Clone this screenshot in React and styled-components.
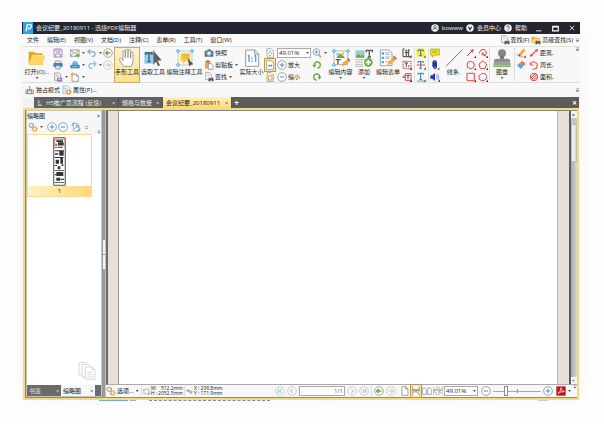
import React, { useState } from "react";
import styled, { createGlobalStyle } from "styled-components";

const BLUE = "#3f93d2";
const RED = "#e04545";
const GREEN = "#68ad3c";
const INK = "#666";

// small icons are drawn on a 30 unit grid, the large ones on a 54 unit grid
const glyphs = {
  save: (
    <g fill="none" stroke="#a48bc9" strokeWidth="3">
      <path d="M3 3h22l2 3v21H3z" />
      <path d="M9 3v9h12V3M8 27v-9h14v9" />
      <path d="M16 5v4" />
    </g>
  ),
  print: (
    <g>
      <path d="M7 3h16v7H7z" fill="#fff" stroke="#777" strokeWidth="2" />
      <rect x="1" y="9" width="28" height="12" rx="3" fill="#3f84c0" />
      <path d="M8 17h14v10H8z" fill="#fff" stroke="#777" strokeWidth="2" />
      <path d="M11 21h8M11 24h8" stroke="#777" />
    </g>
  ),
  docExport: (
    <g>
      <path d="M5 3h13l5 5v17H5z" fill="#fff" stroke="#777" strokeWidth="2" />
      <path d="M9 9h7M9 13h10" stroke="#999" strokeWidth="2" />
      <path d="M12 17h16v12H12z" fill="#9779bd" />
      <path d="M16 20h7v3h-7z" fill="#fff" />
    </g>
  ),
  mail: (
    <g>
      <path d="M2 6h25v19H2z" fill="#fff" stroke="#777" strokeWidth="2" />
      <path d="M2 6l12 10L27 6M2 25l9-11M27 25l-9-11" fill="none" stroke="#777" strokeWidth="2" />
      <path d="M16 20h7v-4l7 7-7 6v-4h-7z" fill={GREEN} />
    </g>
  ),
  scan: (
    <g>
      <path d="M5 15L10 4h10l6 11z" fill="#5fb3e8" />
      <path d="M1 15h28v10H1z" fill="#3f84c0" />
      <path d="M5 20h18" stroke="#cde7f7" strokeWidth="2" />
    </g>
  ),
  docNew: (
    <g>
      <path d="M6 6h13l6 6v16H6z" fill="#fff" stroke="#777" strokeWidth="2" />
      <path d="M19 6v6h6" fill="none" stroke="#777" strokeWidth="2" />
      <path d="M7 0v13M1 7h12M3 3l8 8M11 3l-8 8" stroke="#f2a23c" strokeWidth="2" />
    </g>
  ),
  undo: <path d="M10 4L3 11l7 7M4 11h13a7 7 0 0 1 0 14h-3" fill="none" stroke="#77b4e6" strokeWidth="4" />,
  redo: <path d="M20 4l7 7-7 7M26 11H13a7 7 0 0 0 0 14h3" fill="none" stroke="#8bc1ea" strokeWidth="4" />,
  back: (
    <g fill="none">
      <circle cx="15" cy="15" r="13" stroke="#888" strokeWidth="2" />
      <path d="M14 9l-6 6 6 6M9 15h13" stroke={GREEN} strokeWidth="4" />
    </g>
  ),
  forward: (
    <g fill="none">
      <circle cx="15" cy="15" r="13" stroke="#bbb" strokeWidth="2" />
      <path d="M16 9l6 6-6 6M21 15H8" stroke="#acd393" strokeWidth="3" />
    </g>
  ),
  camera: (
    <g>
      <path d="M2 8h7l2-4h9l2 4h6v18H2z" fill="#6b6b6b" />
      <circle cx="15" cy="16" r="8" fill="#6db8ec" />
      <circle cx="15" cy="16" r="4" fill="#fff" />
    </g>
  ),
  clipboard: (
    <g>
      <path d="M3 4h17v22H3z" fill="#f0a849" />
      <path d="M7 1h9v6H7z" fill="#777" />
      <path d="M13 11h9l5 5v12H13z" fill="#fff" stroke="#777" strokeWidth="2" />
    </g>
  ),
  find: (
    <g>
      <path d="M5 2h11l6 6v15H5z" fill="#fff" stroke="#888" strokeWidth="2" />
      <path d="M9 8h6M9 12h8" stroke="#9cc" strokeWidth="2" />
      <path d="M14 17h5l1 3h2l1-3h5l1 11h-6v-4h-3v4h-7z" fill="#555" />
    </g>
  ),
  findFolder: (
    <g>
      <path d="M1 5h9l3 3h13v17H1z" fill="#e9b53b" />
      <path d="M1 25l5-13h24l-5 13z" fill="#ffd76a" />
      <path d="M14 17h5l1 3h2l1-3h5l1 11h-6v-4h-3v4h-7z" fill="#555" />
    </g>
  ),
  fitPage: (
    <g>
      <path d="M6 2h12l7 7v19H6z" fill="#fff" stroke="#888" strokeWidth="2" />
      <path d="M15 7l-4 4h8zM15 25l-4-4h8zM9 16l4-3v6zM22 16l-4-3v6z" fill="#4da3e0" />
    </g>
  ),
  fitWidth: (
    <g>
      <path d="M5 2h14l7 7v19H5z" fill="#fff" stroke="#888" strokeWidth="2" />
      <path d="M8 17l5-5v3h5v-3l5 5-5 5v-3h-5v3z" fill="#4da3e0" />
    </g>
  ),
  fitVisible: (
    <g>
      <path d="M6 2h12l7 7v19H6z" fill="#fff" stroke="#888" strokeWidth="2" />
      <path d="M10 11h11v13H10z" fill="none" stroke="#f09a32" strokeWidth="3" />
    </g>
  ),
  plus: (
    <g fill="none">
      <circle cx="15" cy="15" r="13" fill="#fff" stroke="#777" strokeWidth="2" />
      <path d="M15 8v14M8 15h14" stroke={BLUE} strokeWidth="3" />
    </g>
  ),
  minus: (
    <g fill="none">
      <circle cx="15" cy="15" r="13" fill="#fff" stroke="#777" strokeWidth="2" />
      <path d="M8 15h14" stroke={BLUE} strokeWidth="3" />
    </g>
  ),
  loupe: (
    <g fill="none">
      <path d="M19 19l8 9" stroke="#f2a23c" strokeWidth="5" />
      <circle cx="13" cy="12" r="10" fill="#fff" stroke="#777" strokeWidth="2" />
      <path d="M13 7v10M8 12h10" stroke={BLUE} strokeWidth="3" />
    </g>
  ),
  rotateLeft: (
    <g>
      <path d="M7 15a9 9 0 1 1 9 9" fill="none" stroke={GREEN} strokeWidth="4" />
      <path d="M1 14h13l-7 9z" fill={GREEN} />
    </g>
  ),
  rotateRight: (
    <g>
      <path d="M23 15a9 9 0 1 0-9 9" fill="none" stroke={GREEN} strokeWidth="4" />
      <path d="M16 14h13l-7 9z" fill={GREEN} />
    </g>
  ),
  typewriter: (
    <g fill="none" stroke="#444" strokeWidth="3">
      <path d="M3 3h5M3 3v23h22M8 14h11M13 14v12M20 5v21M17 6h6" />
      <path d="M11 7h4v4h-4z" fill="#444" strokeWidth="1" />
      <path d="M29 21v8h-7z" fill="#333" stroke="none" />
    </g>
  ),
  textBox: (
    <g fill="none">
      <path d="M3 4h24v21H3z" stroke={RED} strokeWidth="3" strokeDasharray="5 2" />
      <path d="M8 9h10M13 9v11M18 18h5" stroke="#444" strokeWidth="3" />
      <path d="M30 23v7h-7z" fill="#333" />
    </g>
  ),
  callout: (
    <g fill="none">
      <path d="M10 5h17v20H10zM10 10L2 15l8 3" stroke={RED} strokeWidth="3" />
      <path d="M14 10h9M18 10v11" stroke="#444" strokeWidth="3" />
      <path d="M30 23v7h-7z" fill="#333" />
    </g>
  ),
  highlight: (
    <g>
      <rect x="1" y="1" width="26" height="26" rx="5" fill="#f8ed3d" />
      <path d="M6 10V6h16v4M14 6v17M10 23h8" fill="none" stroke="#2f77ae" strokeWidth="3" />
      <path d="M29 22v7h-6z" fill="#333" />
    </g>
  ),
  strike: (
    <g fill="none">
      <path d="M6 9V5h16v4M14 5v20M10 25h8" stroke="#2f77ae" strokeWidth="3" />
      <path d="M2 15h25" stroke={RED} strokeWidth="3" />
      <path d="M29 22v7h-6z" fill="#333" />
    </g>
  ),
  underline: (
    <g fill="none">
      <path d="M6 8V4h16v4M14 4v18M10 22h8" stroke="#2f77ae" strokeWidth="3" />
      <path d="M3 27h22" stroke="#4ab58a" strokeWidth="3" />
      <path d="M29 22v7h-6z" fill="#333" />
    </g>
  ),
  note: (
    <g>
      <path d="M2 3h26v18H14l-8 7 1-7H2z" fill="#f5ee1c" stroke="#98920f" strokeWidth="2" />
      <path d="M7 9h16M7 14h14" stroke="#98920f" strokeWidth="2" />
    </g>
  ),
  attach: (
    <g fill="none">
      <path d="M9 20V8a5 5 0 0 1 10 0v13a4 4 0 0 1-8 0V9h4v11" stroke="#23338f" strokeWidth="4" />
      <path d="M28 22v7h-6z" fill="#333" />
    </g>
  ),
  sound: (
    <g>
      <path d="M1 10h6l8-7v24l-8-7H1z" fill="#1e39b0" />
      <path d="M19 9q4 6 0 12M23 5q7 10 0 20" fill="none" stroke="#5a6cc0" strokeWidth="2" />
      <path d="M30 22v7h-6z" fill="#333" />
    </g>
  ),
  arrow: (
    <g fill="none">
      <path d="M3 24L20 7" stroke={RED} strokeWidth="3" />
      <path d="M24 3l-4 11-7-7z" fill={RED} />
      <path d="M30 23v7h-6z" fill="#333" />
    </g>
  ),
  circle: (
    <g fill="none">
      <circle cx="14" cy="15" r="11" stroke={RED} strokeWidth="3" />
      <path d="M30 23v7h-6z" fill="#333" />
    </g>
  ),
  square: (
    <g fill="none">
      <path d="M3 4h22v22H3z" stroke={RED} strokeWidth="3" />
      <path d="M30 23v7h-6z" fill="#333" />
    </g>
  ),
  lasso: (
    <g fill="none">
      <path d="M3 16L11 4l9 1 6 10-7 8-8-4 3-5 11 12" stroke={RED} strokeWidth="3" />
      <path d="M30 23v7h-6z" fill="#333" />
    </g>
  ),
  pentagon: (
    <g fill="none">
      <path d="M14 3l12 9-5 14H7L3 12z" stroke={RED} strokeWidth="3" />
      <path d="M30 23v7h-6z" fill="#333" />
    </g>
  ),
  cloud: (
    <g fill="none">
      <path
        d="M8 8q3-6 8-3 6-3 8 4 5 4 1 9 0 6-7 7-6 4-10-1-7-1-5-8-2-6 5-8z"
        stroke={RED}
        strokeWidth="3"
      />
      <path d="M30 23v7h-6z" fill="#333" />
    </g>
  ),
  pencil: (
    <g>
      <path d="M9 18L22 2l6 5-13 16z" fill="#f2a23c" />
      <path d="M9 18l6 5-8 2z" fill="#555" />
      <path d="M1 21q4-4 6 1t9 5l6-1" fill="none" stroke={RED} strokeWidth="2" />
      <path d="M29 22v7h-6z" fill="#333" />
    </g>
  ),
  eraser: (
    <g>
      <path d="M12 8l7-6 10 9-7 8z" fill="#f0763f" />
      <path d="M12 8l10 11-8 8L3 16z" fill="#52a4e2" />
    </g>
  ),
  distance: (
    <g>
      <path d="M8 21L22 8" stroke={RED} strokeWidth="5" strokeDasharray="5 2" />
      <path d="M3 26l2-9 7 7zM27 3l-2 9-7-7z" fill={RED} />
    </g>
  ),
  perimeter: <path d="M5 12l7-8 13 7-2 14-12 3M4 7v8h8" fill="none" stroke={RED} strokeWidth="3" />,
  area: (
    <g fill="none" stroke={RED} strokeWidth="3">
      <circle cx="15" cy="15" r="11" />
      <path d="M6 18L18 5M8 23L24 7M13 25l11-11" />
    </g>
  ),
  download: <path d="M14 3v15M9 12l5 7 5-7M3 14v12h22V14M8 26V12M20 26V12" fill="none" stroke="#888" strokeWidth="3" />,
  properties: (
    <g>
      <path d="M3 3h14l6 6v17H3z" fill="#fff" stroke="#5aa6dc" strokeWidth="2" />
      <path d="M7 10h7M7 15h6M7 20h4" stroke="#4da3e0" strokeWidth="2" />
      <circle cx="20" cy="21" r="6" fill="none" stroke="#f09a32" strokeWidth="5" strokeDasharray="4 1" />
    </g>
  ),
  gears: (
    <g fill="none">
      <circle cx="10" cy="10" r="6" stroke="#999" strokeWidth="4" strokeDasharray="4 1" />
      <circle cx="20" cy="21" r="6" stroke="#f2a23c" strokeWidth="5" strokeDasharray="4 1" />
    </g>
  ),
  pageRotate: (
    <g fill="none">
      <path d="M7 4h12l5 5v18H7z" fill="#fff" stroke="#888" strokeWidth="2" />
      <path d="M3 11q0-8 8-9M27 19q0 8-8 9M10 21l9-9M13 10h8v8" stroke="#4da3e0" strokeWidth="3" />
    </g>
  ),
  tree: <path d="M3 5h14M3 13h9M3 21h18M3 28h24" fill="none" stroke="#d5d5d5" strokeWidth="4" />,
  size: <path d="M8 5h18v20H4V9M1 12l3-7 5 5M22 22l4 6 3-6" fill="none" stroke="#777" strokeWidth="2" />,
  position: <path d="M1 12h16M9 5v13M14 17h15M21 11v15" fill="none" stroke="#777" strokeWidth="3" />,
  first: (
    <g fill="none">
      <circle cx="15" cy="15" r="13" stroke="#bbb" strokeWidth="2" />
      <path d="M10 9v12M20 9l-6 6 6 6" stroke="#82c1ee" strokeWidth="3" />
    </g>
  ),
  prev: (
    <g fill="none">
      <circle cx="15" cy="15" r="13" stroke="#bbb" strokeWidth="2" />
      <path d="M17 9l-6 6 6 6" stroke="#82c1ee" strokeWidth="3" />
    </g>
  ),
  next: (
    <g fill="none">
      <circle cx="15" cy="15" r="13" stroke="#bbb" strokeWidth="2" />
      <path d="M13 9l6 6-6 6" stroke="#82c1ee" strokeWidth="3" />
    </g>
  ),
  last: (
    <g fill="none">
      <circle cx="15" cy="15" r="13" stroke="#bbb" strokeWidth="2" />
      <path d="M10 9l6 6-6 6M20 9v12" stroke="#82c1ee" strokeWidth="3" />
    </g>
  ),
  onePage: <path d="M6 2h11l7 7v19H6zM17 2v7h7" fill="#fff" stroke="#777" strokeWidth="2" />,
  scrollPage: (
    <g fill="#fff" stroke="#777" strokeWidth="2">
      <path d="M5 1v9h20V1M5 29V18h12l8 7v4" />
      <path d="M2 14h26" stroke="#999" strokeWidth="3" />
    </g>
  ),
  twoPages: <path d="M1 6h7l5 5v14H1zM17 6h7l5 5v14H17z" fill="#fff" stroke="#888" strokeWidth="2" />,
  twoScroll: (
    <path d="M2 2v9h10V2M18 2v9h10V2M2 28V15l10 8v5M18 28V15l10 8v5M0 13h30" fill="none" stroke="#999" strokeWidth="2" />
  ),
  pdf: (
    <g>
      <path d="M1 1h28v28H1z" fill="#c4161c" />
      <path d="M6 22q10-6 9-17 1 11 10 12-10-1-19 5z" fill="none" stroke="#fff" strokeWidth="2" />
    </g>
  ),
  user: (
    <g>
      <circle cx="15" cy="15" r="14" fill="#f2f2f2" />
      <circle cx="15" cy="11" r="5" fill="none" stroke="#23262f" strokeWidth="2" />
      <path d="M6 24q1-8 9-8t9 8" fill="none" stroke="#23262f" strokeWidth="2" />
    </g>
  ),
  vip: (
    <g>
      <circle cx="15" cy="15" r="14" fill="#f2f2f2" />
      <path d="M9 10l6 11 6-11" fill="none" stroke="#23262f" strokeWidth="4" />
    </g>
  ),
  help: (
    <g>
      <circle cx="15" cy="15" r="14" fill="#f2f2f2" />
      <path d="M10 11q1-5 6-4 6 2 3 7l-4 4M15 21v3" fill="none" stroke="#23262f" strokeWidth="3" />
    </g>
  ),
  minimize: <path d="M5 25h22" stroke="#fff" strokeWidth="4" />,
  maximize: <path d="M3 6h24v19H3zM3 8h24" fill="none" stroke="#fff" strokeWidth="5" />,
  close: <path d="M4 4l22 22M26 4L4 26" stroke="#fff" strokeWidth="4" />,
  chevrons: <path d="M8 5l7 7 7-7M8 17l7 7 7-7" fill="none" stroke="#555" strokeWidth="4" />,
  overflow: <path d="M5 5h20M7 15h16l-8 9z" fill="#666" stroke="#666" strokeWidth="3" />,
};

const bigGlyphs = {
  folder: (
    <g>
      <path d="M2 8h17l4 5h21v34H2z" fill="#e2a628" />
      <path d="M12 19h40l-9 28H2z" fill="#ffd563" />
      <path d="M12 19h40l-1 3H13z" fill="#ffe79c" />
    </g>
  ),
  hand: (
    <path
      d="M17 52L5 34q-3-5 2-6 4 0 8 7V9q0-4 3-4t4 4v17-21q0-4 4-4t4 4v21V6q0-4 4-4t4 4v22V12q0-3 3-3t4 3v24q0 9-6 16z"
      fill="#fff"
      stroke="#777"
      strokeWidth="2"
    />
  ),
  selectText: (
    <g>
      <path d="M1 8h28v36H1z" fill="#8fcdf5" />
      <path d="M5 18v-6h19v6M15 12v26M10 38h10" fill="none" stroke="#555" strokeWidth="4" />
      <path d="M29 4v43" stroke="#555" strokeWidth="2" />
      <path d="M30 7l23 27-12 1 7 14-6 3-6-14-6 7z" fill="#606060" />
    </g>
  ),
  editNote: (
    <g>
      <path d="M6 6h42v42H6z" fill="#fff4ce" stroke="#8ebfdf" strokeWidth="2" />
      <path d="M14 13h28v22H30l-9 9v-9h-7z" fill="#fbc940" />
      <path d="M19 19h18M19 25h18" stroke="#d69a1b" strokeWidth="2" />
      <path d="M35 28l17 18-8 1-4 6z" fill="#505050" />
      <g fill="#fff" stroke="#4da3e0" strokeWidth="3">
        <circle cx="6" cy="6" r="4" />
        <circle cx="48" cy="6" r="4" />
        <circle cx="6" cy="48" r="4" />
      </g>
    </g>
  ),
  actual: (
    <g>
      <path d="M8 3h27l12 12v37H8z" fill="#fff" stroke="#666" strokeWidth="2" />
      <path d="M35 3v12h12" fill="none" stroke="#666" strokeWidth="2" />
      <path d="M14 22l4-3v20M34 22l4-3v20M27 25v4M27 34v4" fill="none" stroke="#4da3e0" strokeWidth="4" />
    </g>
  ),
  editContent: (
    <g>
      <path d="M6 6h41v41H6z" fill="#fff" stroke="#8d8d8d" strokeWidth="2" />
      <path d="M13 27l9-15 9 6 9 9z" fill={GREEN} />
      <path d="M13 12h10v8H13z" fill="#91cdf0" />
      <circle cx="33" cy="14" r="4" fill="#f8c03c" />
      <path d="M11 32h15M18 32v14" stroke="#555" strokeWidth="4" />
      <path d="M29 51l3-10 16-12 6 7-15 13z" fill="#f3a64c" />
      <path d="M48 29l6 7" stroke={RED} strokeWidth="4" />
      <g fill="#fff" stroke="#4da3e0" strokeWidth="3">
        <circle cx="6" cy="6" r="4" />
        <circle cx="48" cy="6" r="4" />
        <circle cx="6" cy="48" r="4" />
      </g>
    </g>
  ),
  add: (
    <g>
      <path d="M1 4h28v22H1z" fill="#92ccef" />
      <path d="M1 26l9-12 7 7 6-5 6 10z" fill={GREEN} />
      <circle cx="22" cy="9" r="3" fill="#f8c03c" />
      <path d="M34 10V4h18v6M43 4v20M38 24h10" fill="none" stroke="#555" strokeWidth="4" />
      <path d="M1 32h26M1 39h23M1 46h23M1 52h25" stroke="#999" strokeWidth="2" />
      <circle cx="40" cy="40" r="13" fill={GREEN} />
      <path d="M40 32v16M32 40h16" stroke="#fff" strokeWidth="5" />
    </g>
  ),
  editForm: (
    <g>
      <path d="M4 3h26l9 9v38H4z" fill="#fff" stroke="#777" strokeWidth="2" />
      <path d="M8 10h7v7H8zM8 23h7v7H8zM8 36h7v7H8z" fill="#4da3e0" />
      <path d="M19 11h13M19 16h13M19 24h15M19 29h12M19 38h9" stroke="#8cb9d8" strokeWidth="3" />
      <path d="M25 49l3-11 17-16 8 7-17 16z" fill="#f3a64c" />
      <path d="M44 22l8 8" stroke={RED} strokeWidth="4" />
    </g>
  ),
  line: <path d="M3 52L51 3" stroke={RED} strokeWidth="3" />,
  stamp: (
    <g>
      <circle cx="27" cy="13" r="12" fill="#858585" />
      <path d="M22 20h10l2 13H20z" fill="#777" />
      <path d="M3 33q2-4 8-4h32q6 0 8 4v8H3z" fill="#8e8e8e" />
      <path d="M1 43h52v4H1z" fill="#6b6b6b" />
      <path d="M1 49h52v5H1z" fill="#7dbb4d" />
    </g>
  ),
  pages: (
    <g fill="#fff" stroke="#c6c6c6" strokeWidth="2">
      <path d="M3 2h22l7 7v30H3z" />
      <path d="M12 8h22l7 7v30H12z" />
      <path d="M22 15h20l9 9v28H22zM42 15v9h9M28 31h15M28 38h17M28 45h17" />
    </g>
  ),
};

function Icon({ name, size = 10 }) {
  return (
    <Svg viewBox="0 0 30 30" width={size} height={size} aria-hidden="true">
      {glyphs[name]}
    </Svg>
  );
}

function BigIcon({ name }) {
  return (
    <Svg viewBox="0 0 54 54" width="18" height="18" aria-hidden="true">
      {bigGlyphs[name]}
    </Svg>
  );
}

function Tool({ icon, label, width, caret, active }) {
  return (
    <ToolButton $width={width} $active={active}>
      <BigIcon name={icon} />
      <ToolLabel>{label}</ToolLabel>
      {caret && <Caret />}
    </ToolButton>
  );
}

// each item: [icon, label, has a menu, is selected]
function Stack({ items, width }) {
  return (
    <StackColumn $width={width}>
      {items.map(([icon, label, caret, active]) => (
        <SmallButton key={icon} $active={active} aria-label={label || icon}>
          <Icon name={icon} />
          {label && <span>{label}</span>}
          {caret && <Caret />}
        </SmallButton>
      ))}
    </StackColumn>
  );
}

function ZoomSelect({ label }) {
  return (
    <SelectBox>
      <Select aria-label={label} defaultValue="49.01%">
        <option>49.01%</option>
        <option>100%</option>
      </Select>
      <Caret />
    </SelectBox>
  );
}

const menus = ["文件", "编辑(E)", "视图(V)", "文档(D)", "注释(C)", "表单(R)", "工具(T)", "窗口(W)"];

function Ribbon() {
  return (
    <RibbonBar>
      <Tool icon="folder" label="打开(O)..." width={30} caret />
      <Stack width={17} items={[["save"], ["print"], ["docExport", "", true]]} />
      <Stack width={17} items={[["mail", "", true], ["scan", "", true], ["docNew", "", true]]} />
      <Stack width={16} items={[["undo", "", true], ["redo", "", true]]} />
      <Stack width={12} items={[["back"], ["forward"]]} />
      <Tool icon="hand" label="手形工具" width={26} active />
      <Tool icon="selectText" label="选取工具" width={26} />
      <Tool icon="editNote" label="编辑注释工具" width={37} />
      <Stack
        width={36}
        items={[["camera", "快照"], ["clipboard", "剪贴板", true], ["find", "查找", true]]}
      />
      <Tool icon="actual" label="实际大小" width={25} />
      <Stack width={12} items={[["fitPage"], ["fitWidth", "", false, true], ["fitVisible"]]} />
      <StackColumn $width={35}>
        <ZoomSelect label="缩放比例" />
        <SmallButton>
          <Icon name="plus" />
          <span>放大</span>
        </SmallButton>
        <SmallButton>
          <Icon name="minus" />
          <span>缩小</span>
        </SmallButton>
      </StackColumn>
      <Stack width={17} items={[["loupe", "", true], ["rotateLeft"], ["rotateRight"]]} />
      <Tool icon="editContent" label="编辑内容" width={25} caret />
      <Tool icon="add" label="添加" width={22} caret />
      <Tool icon="editForm" label="编辑表单" width={26} />
      <Stack width={13} items={[["typewriter"], ["textBox"], ["callout"]]} />
      <Divider />
      <Stack width={13} items={[["highlight"], ["strike"], ["underline"]]} />
      <Divider />
      <Stack width={13} items={[["note"], ["attach"], ["sound"]]} />
      <Tool icon="line" label="线条," width={23} />
      <Stack width={12} items={[["arrow"], ["circle"], ["square"]]} />
      <Stack width={12} items={[["lasso"], ["pentagon"], ["cloud"]]} />
      <Divider />
      <Tool icon="stamp" label="图章" width={24} caret />
      <Divider />
      <Stack width={13} items={[["pencil"], ["eraser"]]} />
      <Stack width={28} items={[["distance", "距离,"], ["perimeter", "周长,"], ["area", "面积,"]]} />
      <Spacer />
      <Icon name="overflow" size={5} />
    </RibbonBar>
  );
}

function ThumbnailPanel() {
  return (
    <Side>
      <PanelHead>
        缩略图
        <Spacer />
        <TinyClose aria-label="关闭缩略图">×</TinyClose>
      </PanelHead>
      <PanelTools>
        <SmallButton aria-label="选项">
          <Icon name="gears" />
          <Caret />
        </SmallButton>
        <ToolPair>
          <SmallButton aria-label="放大缩略图">
            <Icon name="plus" />
          </SmallButton>
          <SmallButton aria-label="缩小缩略图">
            <Icon name="minus" />
          </SmallButton>
        </ToolPair>
        <SmallButton aria-label="旋转页面">
          <Icon name="pageRotate" />
        </SmallButton>
        <Icon name="chevrons" size={5} />
        <Spacer />
        <PanelMore>
          <Icon name="overflow" size={4} />
        </PanelMore>
      </PanelTools>
      <ThumbList>
        <Thumb>
          <Svg viewBox="0 0 39 147" width="13" height="49" aria-hidden="true">
            <rect x="2" y="2" width="35" height="143" rx="3" fill="#fff" stroke="#777" strokeWidth="4" />
            <g fill="#333">
              <path d="M10 10h20v5H10zM7 20h5v3H7zM15 16h17v8H15zM5 31h8v2H5zM15 29h14v3H15z" />
              <path d="M6 40h27v3H6zM19 43h13v13H19zM6 49h10v4H6zM5 60h27v3H5zM22 63h8v17H22z" />
              <path d="M8 68h10v12H8zM5 84h7v3H5zM14 88h8v9h-8zM26 82h5v5h-5zM5 99h28v2H5z" />
              <path d="M10 105h21v12H10zM6 111h4v4H6zM10 122h12v9H10zM24 125h9v4h-9zM5 135h29v2H5z" />
            </g>
            <rect x="4" y="7" width="32" height="19" fill="none" stroke="#ef7b45" strokeWidth="3" />
          </Svg>
          <ThumbLabel>1</ThumbLabel>
        </Thumb>
        <Ghost>
          <BigIcon name="pages" />
        </Ghost>
      </ThumbList>
      <PanelTabs>
        <PanelTab>
          书签 <Mark>×</Mark>
        </PanelTab>
        <PanelTab $active>
          缩略图 <Mark>×</Mark>
        </PanelTab>
      </PanelTabs>
    </Side>
  );
}

function StatusBar() {
  const [zoom, setZoom] = useState(24);
  return (
    <Status>
      <SmallButton>
        <Icon name="gears" />
        <span>选项...</span>
        <Caret />
      </SmallButton>
      <Divider />
      <Icon name="size" size={7} />
      <Measure>
        <dt>W:</dt>
        <dd>512.2mm</dd>
        <dt>H :</dt>
        <dd>2052.5mm</dd>
      </Measure>
      <Divider />
      <Icon name="position" size={7} />
      <Measure>
        <dt>X :</dt>
        <dd>238.8mm</dd>
        <dt>Y :</dt>
        <dd>171.9mm</dd>
      </Measure>
      <Spacer />
      <StatusGroup>
        <SmallButton aria-label="第一页">
          <Icon name="first" />
        </SmallButton>
        <SmallButton aria-label="上一页">
          <Icon name="prev" />
        </SmallButton>
        <PageField aria-label="页码" defaultValue="1/1" />
        <SmallButton aria-label="下一页">
          <Icon name="next" />
        </SmallButton>
        <SmallButton aria-label="最后一页">
          <Icon name="last" />
        </SmallButton>
        <Divider />
        <SmallButton aria-label="后退">
          <Icon name="back" />
        </SmallButton>
        <SmallButton aria-label="前进">
          <Icon name="forward" />
        </SmallButton>
      </StatusGroup>
      <ViewModes>
        <SmallButton aria-label="单页">
          <Icon name="onePage" />
        </SmallButton>
        <SmallButton aria-label="连续" $active>
          <Icon name="scrollPage" />
        </SmallButton>
        <SmallButton aria-label="双页">
          <Icon name="twoPages" />
        </SmallButton>
        <SmallButton aria-label="双页连续">
          <Icon name="twoScroll" />
        </SmallButton>
      </ViewModes>
      <ZoomSelect label="页面缩放" />
      <ZoomControls>
        <SmallButton aria-label="缩小页面">
          <Icon name="minus" />
        </SmallButton>
        <Range
          type="range"
          aria-label="缩放"
          value={zoom}
          onChange={(e) => setZoom(Number(e.target.value))}
        />
        <SmallButton aria-label="放大页面">
          <Icon name="plus" />
        </SmallButton>
      </ZoomControls>
      <SmallButton aria-label="PDF">
        <Icon name="pdf" />
        <Caret />
      </SmallButton>
      <StatusMore>
        <Icon name="overflow" size={4} />
      </StatusMore>
    </Status>
  );
}

function App() {
  return (
    <Page>
      <GlobalStyle />
      <Window>
        <TitleBar>
          <Logo viewBox="0 0 30 36" width="10" height="12" aria-hidden="true">
            <path d="M0 0h30v36H0z" fill="#22a7ee" />
            <path d="M9 28l4-20h9q6 2 2 8-4 5-10 4" fill="none" stroke="#fff" strokeWidth="4" />
          </Logo>
          <Title>会议纪要_20180911 - 迅捷PDF编辑器</Title>
          <Spacer />
          <TitleButton>
            <Icon name="user" size={8} />
            bowww
          </TitleButton>
          <TitleButton>
            <Icon name="vip" size={8} />
            会员中心
          </TitleButton>
          <TitleButton>
            <Icon name="help" size={8} />
            帮助
          </TitleButton>
          <WindowButtons>
            <TitleButton aria-label="最小化">
              <Icon name="minimize" size={7} />
            </TitleButton>
            <TitleButton aria-label="最大化">
              <Icon name="maximize" size={7} />
            </TitleButton>
            <TitleButton aria-label="关闭">
              <Icon name="close" size={6} />
            </TitleButton>
          </WindowButtons>
        </TitleBar>
        <MenuBar>
          {menus.map((m) => (
            <MenuItem key={m}>{m}</MenuItem>
          ))}
          <Spacer />
          <SmallButton>
            <Icon name="find" />
            <span>查找(F)</span>
          </SmallButton>
          <SmallButton>
            <Icon name="findFolder" />
            <span>高级查找(S)</span>
          </SmallButton>
          <Icon name="overflow" size={5} />
        </MenuBar>
        <Ribbon />
        <PropertyBar>
          <SmallButton>
            <Icon name="download" />
            <span>独占模式</span>
          </SmallButton>
          <SmallButton>
            <Icon name="properties" />
            <span>属性(P)...</span>
          </SmallButton>
          <Spacer />
          <Icon name="overflow" size={5} />
        </PropertyBar>
        <TabBar>
          <TabHandle />
          <Tab $width={85}>
            <Icon name="tree" size={6} />
            H5推广页流程 (反馈) <Mark>×</Mark>
          </Tab>
          <Tab $width={44}>
            规格与数量 <Mark>×</Mark>
          </Tab>
          <Tab $width={69} $active>
            会议纪要_20180911 <Mark>×</Mark>
          </Tab>
          <TabAction aria-label="新建标签">+</TabAction>
          <Spacer />
          <TabAction aria-label="关闭标签">×</TabAction>
        </TabBar>
        <Body>
          <ThumbnailPanel />
          <Splitter>
            <Grip />
            <Grip />
          </Splitter>
          <Viewer>
            <Canvas>
              <Paper />
              <Scroll>
                <ScrollButton aria-label="向上滚动">
                  <Caret $up />
                </ScrollButton>
                <ScrollThumb />
                <ScrollTrack />
                <ScrollButton aria-label="向下滚动">
                  <Caret />
                </ScrollButton>
              </Scroll>
            </Canvas>
            <StatusBar />
          </Viewer>
        </Body>
      </Window>
      <Behind>
        <BehindLine $width={29} $color="#79a7dc" />
        <BehindLine $width={6} $color="#aaa" $dotted />
        <BehindLine $width={9} />
        <BehindLine $width={121} $color="#888" $dotted />
        <Spacer />
        <BehindLine $width={10} $color="#d0d0d0" />
      </Behind>
    </Page>
  );
}

const GlobalStyle = createGlobalStyle`
  * {
    box-sizing: border-box;
  }
  body {
    margin: 0;
    background: #fefefe;
  }
  body, button, input, select {
    font-family: "Open Sans", "Noto Sans CJK SC", sans-serif;
    font-size: 6px;
    line-height: 8px;
    color: #222;
  }
  button {
    padding: 0;
    border: 0;
    background: none;
    white-space: nowrap;
  }
`;

const Svg = styled.svg`
  display: block;
  flex: none;
`;

const Logo = styled(Svg)`
  margin-left: 1px;
`;

const Spacer = styled.div`
  flex: 1;
`;

const Page = styled.div`
  min-height: 100vh;
  padding: 22px 24px;
  display: flex;
  flex-direction: column;
  padding-left: 22px;
`;

const Window = styled.div`
  flex: 1;
  display: flex;
  flex-direction: column;
  background: #f7f7f7;
  box-shadow: 0 0 16px rgba(0, 0, 0, 0.04);
`;

const TitleBar = styled.header`
  height: 12px;
  display: flex;
  align-items: center;
  gap: 3px;
  background: #23262f;
  color: #f0f0f0;
`;

const Title = styled.div`
  white-space: nowrap;
`;

const TitleButton = styled.button`
  display: flex;
  align-items: center;
  gap: 3px;
  color: #f0f0f0;
`;

const WindowButtons = styled.div`
  display: flex;
  align-items: center;
  gap: 10px;
  padding: 0 5px;
`;

const MenuBar = styled.nav`
  height: 13px;
  display: flex;
  align-items: center;
  gap: 2px;
  padding-left: 5px;
  background: #fbfbfb;
  border-bottom: 1px solid #e2e2e2;
`;

const MenuItem = styled.button`
  margin-right: 6px;
`;

const Caret = styled.span`
  flex: none;
  width: 3px;
  height: 2px;
  margin: 0 1px;
  background: #555;
  clip-path: ${(p) => (p.$up ? "polygon(0 100%, 100% 100%, 50% 0)" : "polygon(0 0, 100% 0, 50% 100%)")};
`;

const SmallButton = styled.button`
  flex: none;
  height: 12px;
  display: flex;
  align-items: center;
  gap: 1px;
  background: ${(p) => (p.$active ? "#fbe3a0" : "none")};
  box-shadow: ${(p) => (p.$active ? "0 0 0 1px #b99c50" : "none")};
`;

const RibbonBar = styled.div`
  height: 36px;
  display: flex;
  background: #f8f8f8;
  border-bottom: 1px solid #dedede;
`;

const StackColumn = styled.div`
  flex: none;
  width: ${(p) => p.$width}px;
  height: 36px;
  padding-left: 1px;
  display: flex;
  flex-direction: column;
  align-items: flex-start;
`;

const ToolButton = styled.button`
  flex: none;
  width: ${(p) => p.$width}px;
  height: 36px;
  padding-top: 2px;
  display: flex;
  flex-direction: column;
  align-items: center;
  background: ${(p) => (p.$active ? "linear-gradient(#fdf3d2, #ffe08a)" : "none")};
  box-shadow: ${(p) => (p.$active ? "inset 0 0 0 1px #c3ac6c" : "none")};
`;

const ToolLabel = styled.span`
  margin: 1px 0;
`;

const Divider = styled.div`
  flex: none;
  width: 1px;
  margin: 1px 0;
  align-self: stretch;
  background: #dcdcdc;
`;

const SelectBox = styled.div`
  flex: none;
  width: 34px;
  height: 10px;
  margin: 1px 0;
  display: flex;
  align-items: center;
  background: #fff;
  border: 1px solid #aaa;
`;

const Select = styled.select`
  flex: 1;
  min-width: 0;
  height: 8px;
  padding: 0 0 0 1px;
  border: 0;
  appearance: none;
  background: none;
`;

const PropertyBar = styled.div`
  height: 14px;
  display: flex;
  align-items: center;
  gap: 2px;
  padding-left: 3px;
  background: #f8f8f8;
`;

const TabBar = styled.div`
  height: 11px;
  margin: 0 1px;
  display: flex;
  background: #5c5c5c;
`;

const TabHandle = styled.div`
  width: 11px;
  background: #f1f1f1;
`;

const Tab = styled.button`
  flex: none;
  width: ${(p) => p.$width}px;
  padding: 0 3px;
  display: flex;
  align-items: center;
  gap: 3px;
  border-right: 1px solid #555;
  color: ${(p) => (p.$active ? "#222" : "#eee")};
  background: ${(p) => (p.$active ? "linear-gradient(#fff0bd, #ffd973)" : "#616161")};
`;

const Mark = styled.span`
  margin-left: auto;
  font-size: 5px;
`;

const TabAction = styled.button`
  width: 9px;
  color: #fff;
  font-size: 8px;
  font-weight: bold;
`;

const Body = styled.main`
  flex: 1;
  margin: 0 1px;
  display: flex;
  border: 2px solid #f5db7c;
  background: #858585;
`;

const Side = styled.aside`
  flex: none;
  width: 76px;
  margin: 0 0 1px 1px;
  display: flex;
  flex-direction: column;
  background: #f6f6f6;
  border: 1px solid #c4c4c4;
`;

const PanelHead = styled.div`
  height: 9px;
  display: flex;
  align-items: center;
`;

const TinyClose = styled.button`
  width: 5px;
`;

const PanelTools = styled.div`
  height: 14px;
  padding-left: 1px;
  display: flex;
  align-items: center;
  gap: 3px;
`;

const ToolPair = styled.div`
  display: flex;
  gap: 1px;
`;

const PanelMore = styled.div`
  align-self: flex-end;
`;

const ThumbList = styled.div`
  flex: 1;
  display: flex;
  flex-direction: column;
  justify-content: space-between;
  align-items: flex-start;
  background: #fff;
`;

const Thumb = styled.div`
  width: 65px;
  display: flex;
  flex-direction: column;
  align-items: center;
  padding-top: 2px;
  border: 1px solid #f7dc8d;
`;

const ThumbLabel = styled.div`
  width: 100%;
  height: 10px;
  line-height: 10px;
  text-align: center;
  background: linear-gradient(90deg, #fff1c4, #ffd978);
`;

const Ghost = styled.div`
  align-self: flex-end;
  margin: 0 5px 5px 0;
`;

const PanelTabs = styled.div`
  height: 11px;
  display: flex;
  background: #6b6b6b;
`;

const PanelTab = styled.button`
  width: 34px;
  padding: 0 2px;
  display: flex;
  align-items: center;
  color: ${(p) => (p.$active ? "#222" : "#e4e4e4")};
  background: ${(p) => (p.$active ? "#f6f6f6" : "#6b6b6b")};
`;

const Splitter = styled.div`
  flex: none;
  width: 3px;
  display: flex;
  flex-direction: column;
  justify-content: center;
  gap: 1px;
  background: #9a9a9a;
`;

const Grip = styled.div`
  height: 14px;
  margin-left: 1px;
  background: #f4f4f4;
`;

const Viewer = styled.section`
  flex: 1;
  min-width: 0;
  display: flex;
  flex-direction: column;
  border-left: 1px solid #e0c95c;
  border-bottom: 1px solid #8e8a78;
`;

const Canvas = styled.div`
  flex: 1;
  display: flex;
  margin-top: 1px;
  border-left: 2px solid #6b6b68;
  border-bottom: 1px solid #a9a9a9;
`;

const Paper = styled.div`
  flex: 1;
  background: #fff;
  border: solid #e7dfda;
  border-width: 0 11px 0 10px;
  box-shadow: inset 1px 0 0 #999, inset -1px 0 0 #bbb;
`;

const Scroll = styled.div`
  flex: none;
  width: 8px;
  display: flex;
  flex-direction: column;
  border-left: 2px solid #5e5e5e;
  background: #c5c5c5;
`;

const ScrollButton = styled.button`
  height: 7px;
  display: flex;
  align-items: center;
  background: #f3f3f3;
`;

const ScrollThumb = styled.div`
  height: 38px;
  margin-top: 6px;
  background: linear-gradient(90deg, #f5f5f5, #d9d9d9);
  border: 1px solid #bbb;
`;

const ScrollTrack = styled.div`
  flex: 1;
  background: linear-gradient(90deg, #a9a9a9, #d8d8d8);
`;

const Status = styled.footer`
  flex: none;
  height: 12px;
  display: flex;
  align-items: center;
  gap: 1px;
  background: #f7f7f7;
`;

const StatusMore = styled.div`
  align-self: flex-start;
`;

const Measure = styled.dl`
  margin: 0;
  display: grid;
  grid-template-columns: auto auto;
  column-gap: 1px;
  font-size: 5px;
  line-height: 5px;
  white-space: nowrap;

  dd {
    margin: 0;
    text-align: right;
  }
`;

const StatusGroup = styled.div`
  display: flex;
  align-items: center;
  gap: 2px;
`;

const PageField = styled.input`
  width: 46px;
  height: 10px;
  padding: 0 1px;
  text-align: right;
  color: ${INK};
  border: 1px solid #aaa;
  background: #fff;
`;

const ViewModes = styled(StatusGroup)`
  gap: 1px;
  margin-left: 3px;
`;

const ZoomControls = styled(StatusGroup)`
  margin: 0 2px;
`;

const Range = styled.input`
  width: 48px;
  height: 10px;
  margin: 0;
  appearance: none;
  background: linear-gradient(#aaa, #aaa) center / 100% 1px no-repeat,
    linear-gradient(#888, #888) center / 1px 4px no-repeat;

  &::-webkit-slider-thumb {
    appearance: none;
    width: 4px;
    height: 10px;
    background: #fff;
    border: 1px solid #888;
  }
`;

const Behind = styled.div`
  height: 2px;
  margin: 0 32px 0 77px;
  display: flex;
  gap: 2px;
`;

const BehindLine = styled.div`
  width: ${(p) => p.$width}px;
  height: 1px;
  border-top: 1px ${(p) => (p.$dotted ? "dashed" : "solid")} ${(p) => p.$color || "transparent"};
`;

export default App;
